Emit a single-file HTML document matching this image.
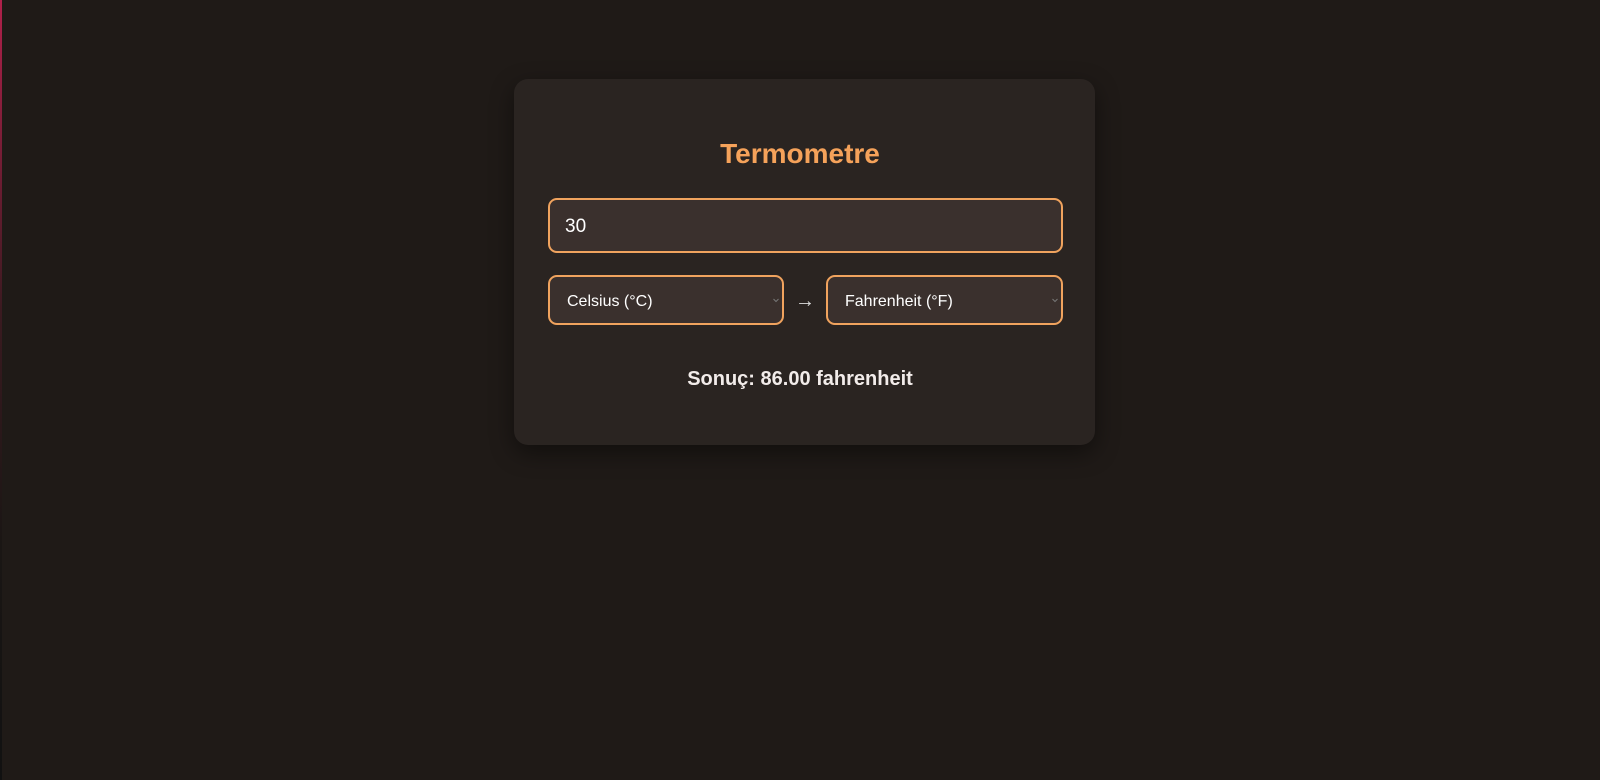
<!DOCTYPE html>
<html><head><meta charset="utf-8"><style>
html,body{margin:0;padding:0;}
body{width:1600px;height:780px;background:#1f1a17;position:relative;overflow:hidden;font-family:"Liberation Sans",sans-serif;}
.edge{position:absolute;left:0;top:0;width:2px;height:780px;background:linear-gradient(#b0204a,#3a1a20 40%,#1a1614 70%,#111 100%);}
.card{position:absolute;left:514px;top:79px;width:581px;height:366px;background:#2a2421;border-radius:14px;box-shadow:0 8px 24px rgba(0,0,0,.45);}
h1{position:absolute;left:0;width:100%;top:136px;margin:0;text-align:center;color:#f5a25a;font-size:28px;font-weight:bold;line-height:36px;}
.box{position:absolute;background:#3a302d;border:2px solid #f0a35e;border-radius:9px;box-sizing:border-box;color:#fff;}
.inp{left:548px;top:198px;width:515px;height:55px;font-size:19px;line-height:53px;padding-left:15px;}
.sel{top:275px;height:50px;font-size:16px;line-height:49px;padding-left:17px;}
.chev{position:absolute;right:3px;top:20px;width:6px;height:6px;}
.arrow{position:absolute;left:795px;top:291px;color:#ddd;font-size:20px;line-height:20px;}
.res{position:absolute;left:0;width:1600px;top:367px;text-align:center;color:#f2ecea;font-weight:bold;font-size:20px;line-height:24px;}
</style></head><body>
<div class="edge"></div>
<div class="card"></div>
<h1>Termometre</h1>
<div class="box inp">30</div>
<div class="box sel" style="left:548px;width:236px;">Celsius (°C)<svg class="chev" viewBox="0 0 6 6"><path d="M0.5 2L3 4.5 5.5 2" stroke="#777" fill="none" stroke-width="1"/></svg></div>
<div class="arrow">→</div>
<div class="box sel" style="left:826px;width:237px;">Fahrenheit (°F)<svg class="chev" viewBox="0 0 6 6"><path d="M0.5 2L3 4.5 5.5 2" stroke="#777" fill="none" stroke-width="1"/></svg></div>
<div class="res">Sonuç: 86.00 fahrenheit</div>
</body></html>
